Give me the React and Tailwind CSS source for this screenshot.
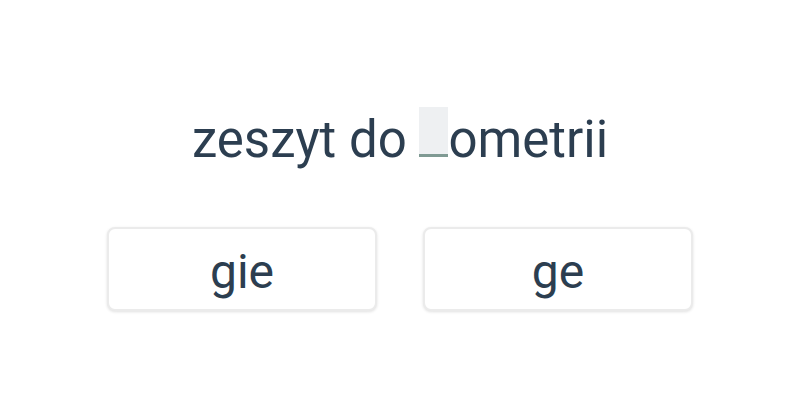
export default function App() {
  return (
    <div className="w-[800px] h-[400px] bg-white flex flex-col items-center" style={{ fontFamily: "Roboto, sans-serif" }}>
      <div className="mt-[105px] h-[70px] text-[51px] text-[#2c3e50] leading-[70px] whitespace-nowrap">
        zeszyt do <span className="inline-block w-[29px] h-[50px] bg-[#eef0f2] border-b-[3px] border-[#7f9a93]"></span>ometrii
      </div>
      <div className="mt-[52px] flex gap-[46px]">
        <button className="w-[270px] h-[84px] pt-[5px] rounded-[8px] border-2 border-[#ebebeb] bg-white shadow-[0_1px_3px_rgba(0,0,0,0.12)] text-[48px] text-[#2c3e50] flex items-center justify-center" style={{ fontFamily: "Roboto, sans-serif" }}>gie</button>
        <button className="w-[270px] h-[84px] pt-[5px] rounded-[8px] border-2 border-[#ebebeb] bg-white shadow-[0_1px_3px_rgba(0,0,0,0.12)] text-[48px] text-[#2c3e50] flex items-center justify-center" style={{ fontFamily: "Roboto, sans-serif" }}>ge</button>
      </div>
    </div>
  );
}
